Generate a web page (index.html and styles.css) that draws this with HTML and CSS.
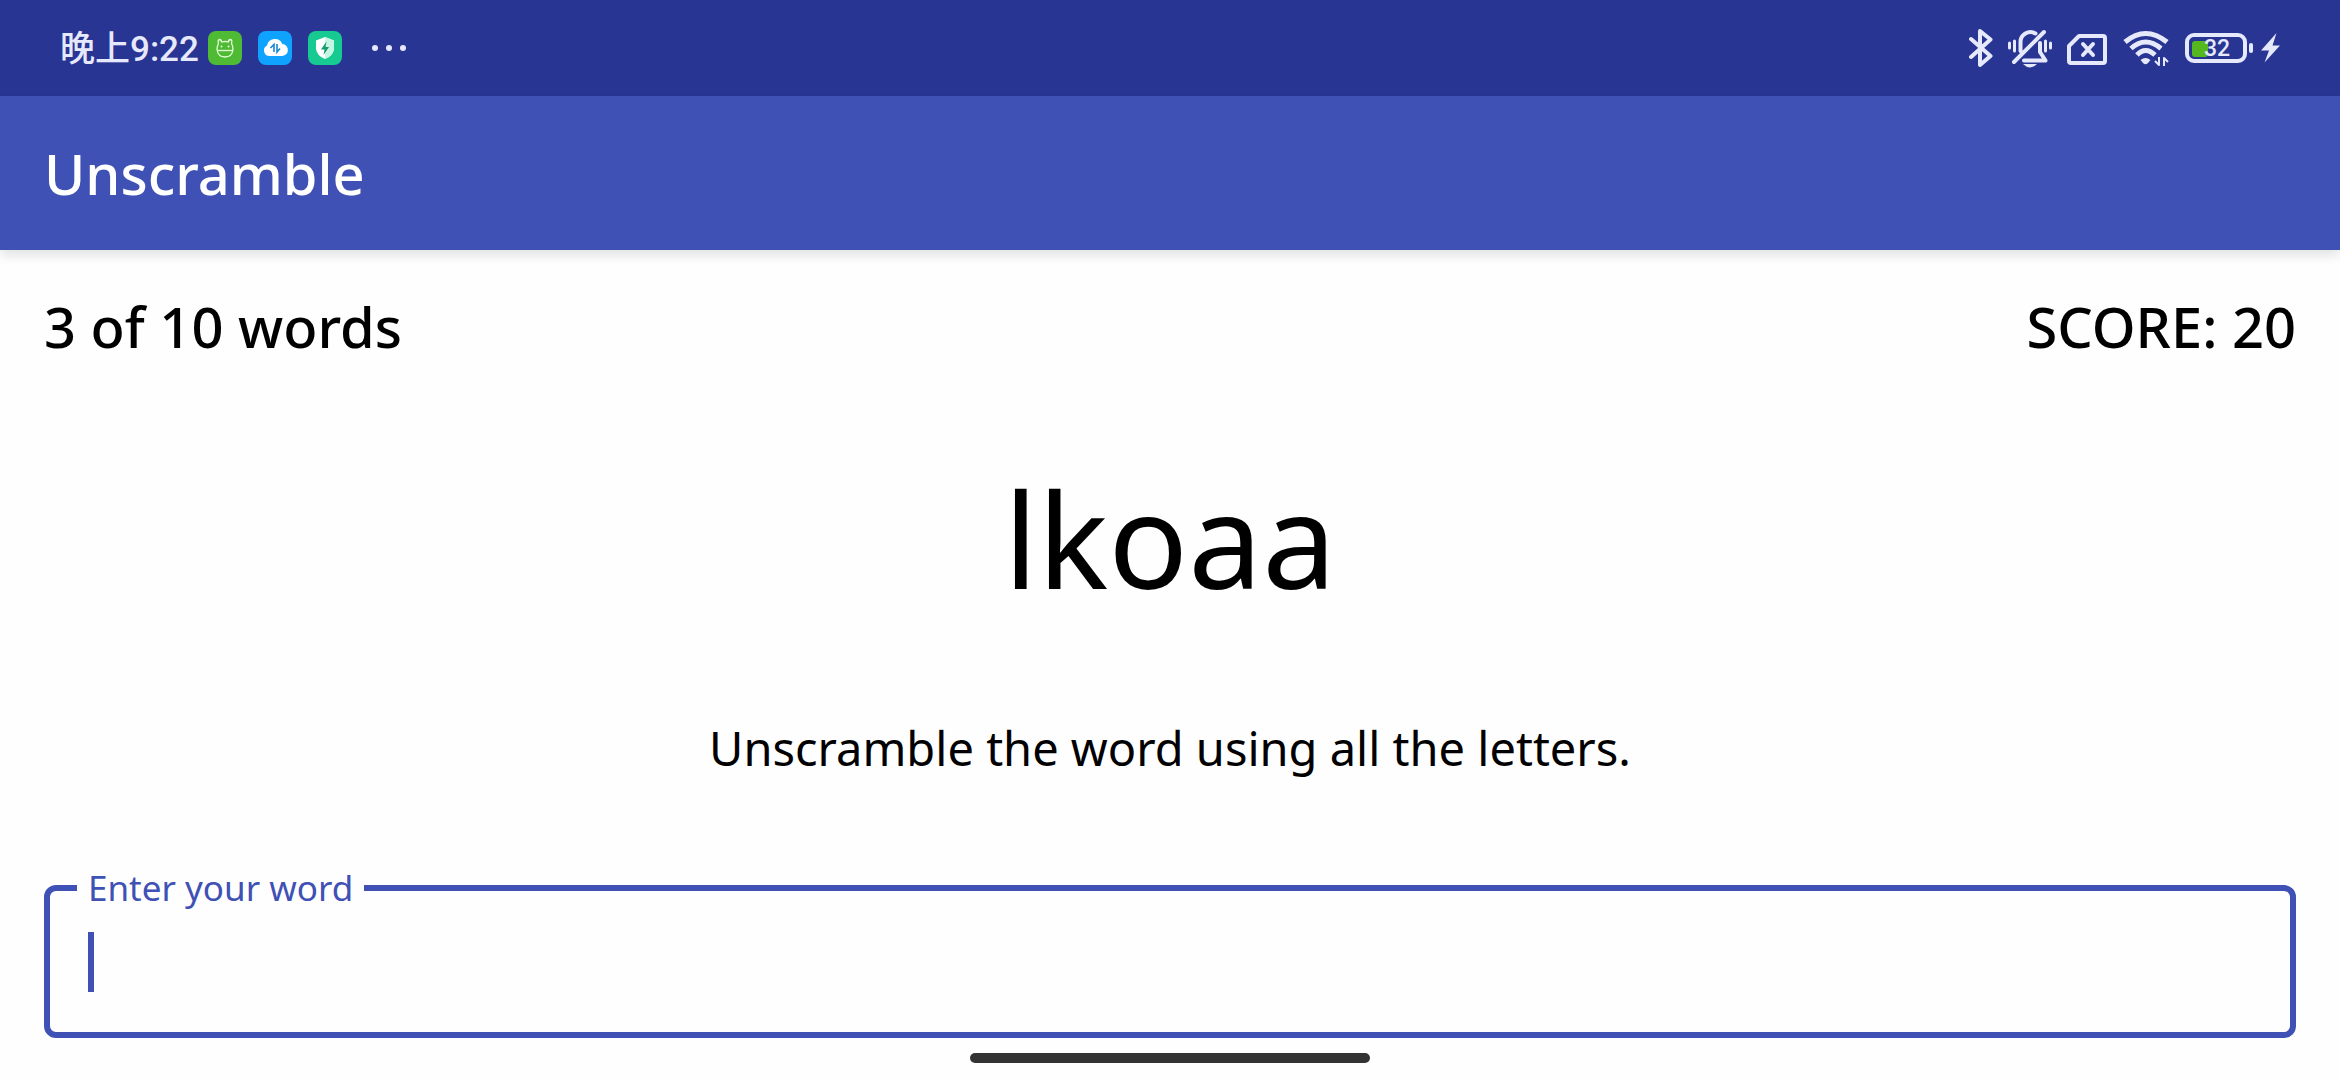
FILE: index.html
```html
<!DOCTYPE html>
<html lang="en">
<head>
<meta charset="utf-8">
<meta name="viewport" content="width=device-width, initial-scale=1">
<title>Unscramble</title>
<link rel="stylesheet" href="styles.css">
</head>
<body>
<div class="status-bar">
  <div class="status-left">
    <span class="clock" lang="zh-CN">晚上9:22</span>
    <div class="notifications">
      <svg class="app-icon" viewBox="0 0 34 34" aria-hidden="true">
        <rect width="34" height="34" rx="8" fill="#4fbb35"/>
        <g fill="none" stroke="#e4ffd8" stroke-width="1.3" stroke-linejoin="round">
          <path d="M10.500 12.500Q9.500 9 11.500 8.500Q13.500 8.500 13.500 11Q17 10 20.500 11Q20.500 8.500 22.500 8.500Q24.500 9 23.500 12.500Q25 15 25 18.500Q24 26 17 26Q10 26 9 18.500Q9 15 10.500 12.500Z"/>
          <path d="M9 19.500H25"/>
        </g>
        <circle cx="13.500" cy="15.500" r="1" fill="#e4ffd8"/><circle cx="20.500" cy="15.500" r="1" fill="#e4ffd8"/>
      </svg>
      <svg class="app-icon" viewBox="0 0 34 34" aria-hidden="true">
        <rect width="34" height="34" rx="8" fill="#10a2ff"/>
        <path d="M11.500 25A5.500 5.500 0 0 1 9 14.600A8 8 0 0 1 24.300 13A6 6 0 0 1 23.500 25Z" fill="#fff"/>
        <path d="M12.500 17 16 13.500V21M19 13V21L22 17.500" fill="none" stroke="#1687d8" stroke-width="1.600"/>
      </svg>
      <svg class="app-icon" viewBox="0 0 34 34" aria-hidden="true">
        <rect width="34" height="34" rx="8" fill="#17ca91"/>
        <path d="M17 6 26 9.500V18Q25 25 17 28Q9 25 8 18V9.500Z" fill="#fff"/>
        <path d="M17 6 26 9.500V18Q25 25 17 28Z" fill="#c5f5e3"/>
        <path d="M18.500 10.500 13 18.500H16.500L15.500 24 21 16H17.500Z" fill="#169a70"/>
      </svg>
    </div>
    <svg class="more" viewBox="0 0 34 6" aria-hidden="true"><g fill="#e6e8fb"><circle cx="3" cy="3" r="3"/><circle cx="17" cy="3" r="3"/><circle cx="31" cy="3" r="3"/></g></svg>
  </div>
  <div class="status-right">
    <svg width="24" height="40" viewBox="0 0 24 40" aria-hidden="true"><path class="line" d="M2 11 21.500 28 11 37V3L21.500 11.500 2 29"/></svg>
    <svg width="44" height="40" viewBox="0 0 44 40" aria-hidden="true">
      <path class="line thin" d="M1.500 15V20M6.500 13V23M37.500 13V23M42.500 15V20"/>
      <path class="line" d="M12.500 23V14.500A10 10 0 0 1 27.500 5.500M32 15V24L37.500 32.500H16M36 4 6 34"/>
      <path class="solid" d="M15 36H29Q22 43 15 36Z"/>
    </svg>
    <svg width="40" height="40" viewBox="0 0 40 40" aria-hidden="true"><path class="line" d="M12 8H36Q38 8 38 10V33Q38 35 36 35H4Q2 35 2 33V18ZM16 16 26 27M26 16 16 27"/></svg>
    <svg width="48" height="40" viewBox="0 0 48 40" aria-hidden="true">
      <path class="line wave" d="M3 14Q23.500-3 45 14M9 20.500Q23.500 7.500 39 20.500M15 27Q23.500 18 33 27"/>
      <path class="solid" d="M18.500 32Q23.500 28 28.500 32L25.500 35.500Q23.500 37 21.500 35.500Z"/>
      <path class="line arrows" d="M37 29V37L33 33M42 38V30L46 34"/>
    </svg>
    <div class="power">
      <div class="battery"><span class="charge"></span><span class="percent">32</span></div>
      <span class="nub"></span>
      <svg class="bolt" width="20" height="40" viewBox="0 0 20 40" aria-hidden="true"><path class="solid" d="M15.500 5 0 22.500H8L3.500 34.500 19 17.500H11.500Z"/></svg>
    </div>
  </div>
</div>
<header class="app-bar"><h1>Unscramble</h1></header>
<main class="game">
  <div class="progress"><span>3 of 10 words</span><span>SCORE: 20</span></div>
  <p class="scrambled">lkoaa</p>
  <p class="instructions">Unscramble the word using all the letters.</p>
  <fieldset class="word-field">
    <legend><label for="word">Enter your word</label></legend>
    <div class="entry"><span class="caret"></span><input id="word" type="text" autocomplete="off"></div>
  </fieldset>
</main>
<div class="home-indicator"></div>
</body>
</html>
```

FILE: styles.css
```css
* { box-sizing: border-box; }

body {
  margin: 0;
  min-height: 100vh;
  display: flex;
  flex-direction: column;
  background: #fefefe;
  color: #000;
  font-family: "Noto Sans", "Noto Sans CJK SC", sans-serif;
}

svg { display: block; flex: none; }

.status-bar {
  height: 96px;
  padding: 0 59px 0 60px;
  display: flex;
  align-items: center;
  justify-content: space-between;
  background: #283593;
  color: #e6e8fb;
}

.status-left, .status-right, .notifications, .power { display: flex; align-items: center; }
.clock { padding-top: 3px; font: 500 35px/40px Roboto, "Noto Sans CJK SC", sans-serif; }
.notifications { gap: 16px; margin-left: 9px; }
.app-icon { width: 34px; height: 34px; }
.more { width: 34px; height: 6px; margin-left: 30px; }
.status-right { gap: 15px; }
.line { fill: none; stroke: #e6e8fb; stroke-width: 4; stroke-linecap: round; stroke-linejoin: round; }
.thin { stroke-width: 3; }
.wave { stroke-width: 5; stroke-linecap: butt; }
.arrows { stroke-width: 2; stroke-linecap: butt; }
.solid { fill: #e6e8fb; }

.battery {
  width: 62px;
  height: 30px;
  display: grid;
  align-items: center;
  border: 4px solid #e6e8fb;
  border-radius: 9px;
}
.charge, .percent { grid-area: 1 / 1; }
.charge { width: 16px; height: 16px; margin-left: 3px; border-radius: 3px; background: #55b81f; }
.percent { margin-left: 15px; font: 500 23px/24px Roboto, sans-serif; }
.nub { width: 4px; height: 10px; margin-left: 2px; border-radius: 2px; background: #e6e8fb; }
.bolt { margin-left: 8px; }

.app-bar {
  height: 154px;
  padding: 0 44px;
  display: flex;
  align-items: center;
  background: #3f51b5;
  color: #fff;
  box-shadow: 0 6px 10px rgba(0, 0, 0, .1);
}
h1, .progress { font-size: 56px; line-height: 72px; font-weight: 500; }
h1 { margin: 0; }

.game { padding: 40px 44px 0; display: flex; flex-direction: column; }
.progress { display: flex; justify-content: space-between; }
p { margin: 0; text-align: center; }
.scrambled { margin-top: 86px; font-size: 132px; line-height: 180px; }
.instructions { margin-top: 90px; font-size: 47px; line-height: 60px; }

.word-field {
  min-width: 0;
  margin: 90px 0 0;
  padding: 24px 38px 40px;
  border: 6px solid #3f51b5;
  border-radius: 12px;
  color: #3f51b5;
}
legend { margin-left: -11px; padding: 0 11px; font-size: 35px; line-height: 40px; }
.entry { display: flex; align-items: center; height: 60px; }
.caret { flex: none; width: 6px; height: 60px; background: #3f51b5; }
input {
  flex: 1;
  min-width: 0;
  padding: 0;
  border: 0;
  outline: 0;
  background: none;
  color: #000;
  font: 44px/60px "Noto Sans", sans-serif;
}

.home-indicator { width: 400px; max-width: 60%; height: 10px; margin: auto auto 17px; border-radius: 5px; background: #333; }
```
